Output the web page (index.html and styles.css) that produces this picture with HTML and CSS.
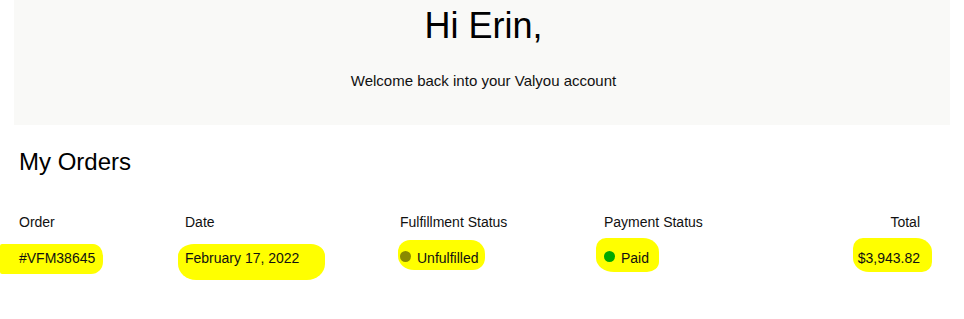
FILE: index.html
```html
<!DOCTYPE html>
<html>
<head>
<meta charset="utf-8">
<link rel="stylesheet" href="styles.css">
</head>
<body>
<div class="page">
  <header class="hero">
    <h1 class="hero-title">Hi Erin,</h1>
    <p class="hero-sub">Welcome back into your Valyou account</p>
  </header>
  <section class="orders">
    <h2 class="orders-title">My Orders</h2>
    <div class="table">
      <div class="th">Order</div>
      <div class="th">Date</div>
      <div class="th">Fulfillment Status</div>
      <div class="th">Payment Status</div>
      <div class="th th-right">Total</div>

      <div class="td"><span class="hl hl-order">#VFM38645</span></div>
      <div class="td"><span class="hl hl-date">February 17, 2022</span></div>
      <div class="td"><span class="hl hl-ful"><span class="dot dot-olive"></span>Unfulfilled</span></div>
      <div class="td"><span class="hl hl-paid"><span class="dot dot-green"></span>Paid</span></div>
      <div class="td td-right"><span class="hl hl-total">$3,943.82</span></div>
    </div>
  </section>
</div>
</body>
</html>
```
FILE: styles.css
```css
* { box-sizing: border-box; }
html, body { margin: 0; padding: 0; background: #fff; }
body {
  font-family: "Liberation Sans", Arial, sans-serif;
  color: #111;
  min-height: 319px;
}
.page { padding: 0 14px 50px; }
.hero {
  background: #f9f9f7;
  text-align: center;
  padding: 5px 0 36px;
}
.hero-title {
  margin: 0;
  font-size: 36px;
  font-weight: 400;
  line-height: 41px;
  color: #000;
  padding-left: 3px;
}
.hero-sub {
  margin: 26px 0 0;
  font-size: 15px;
  line-height: 17px;
  padding-left: 3px;
}
.orders { padding: 23px 30px 0 5px; }
.orders-title {
  margin: 0;
  font-size: 24px;
  font-weight: 400;
  line-height: 28px;
  color: #000;
}
.table {
  margin-top: 38px;
  display: grid;
  grid-template-columns: 166px 215px 204px 1fr auto;
  row-gap: 20px;
  font-size: 14px;
  line-height: 16px;
}
.th-right, .td-right { text-align: right; }
.hl {
  position: relative;
  z-index: 0;
  display: inline-flex;
  align-items: center;
}
.hl::before {
  content: "";
  position: absolute;
  z-index: -1;
  background: #ffff00;
}
.hl-order::before { top: -6px; bottom: -8px; left: -19px; right: -8px; border-radius: 2px 10px 12px 2px / 2px 12px 12px 2px; }
.hl-date::before { top: -6px; bottom: -14px; left: -7px; right: -26px; border-radius: 16px 14px 18px 18px / 12px 12px 16px 16px; }
.hl-ful::before { top: -10px; bottom: -4px; left: -2px; right: -7px; border-radius: 12px 14px 12px 16px / 12px 14px 12px 14px; }
.hl-paid::before { top: -12px; bottom: -6px; left: -8px; right: -10px; border-radius: 10px 16px 12px 18px / 10px 14px 10px 14px; }
.hl-total::before { top: -12px; bottom: -6px; left: -5px; right: -12px; border-radius: 10px 16px 10px 16px / 10px 14px 10px 14px; }
.dot {
  width: 11px;
  height: 11px;
  border-radius: 50%;
  margin-right: 6px;
  transform: translateY(-2px);
}
.dot-olive { background: #8a8a00; }
.dot-green { background: #00a800; }
```
